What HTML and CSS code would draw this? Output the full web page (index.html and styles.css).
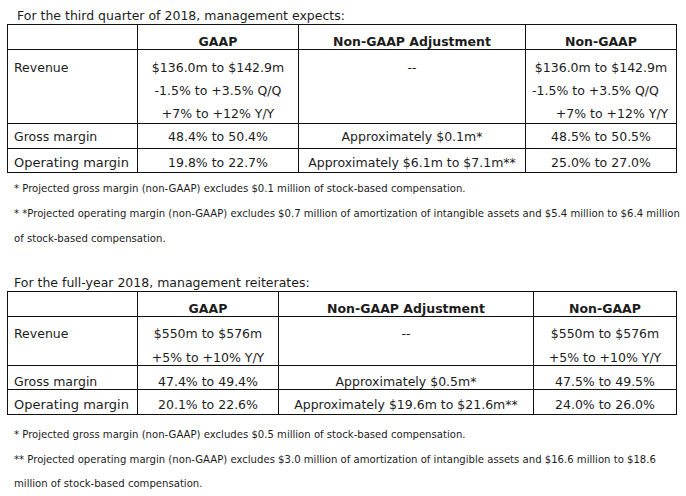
FILE: index.html
```html
<!DOCTYPE html>
<html>
<head>
<meta charset="utf-8">
<link rel="stylesheet" href="styles.css">
</head>
<body>
<div class="page">
  <section class="block block-q3">
    <div class="title title-q3">For the third quarter of 2018, management expects:</div>
    <table class="guide guide-q3">
      <colgroup>
        <col class="c1"><col class="c2"><col class="c3"><col class="c4">
      </colgroup>
      <tr class="head">
        <th></th><th>GAAP</th><th>Non-GAAP Adjustment</th><th>Non-GAAP</th>
      </tr>
      <tr class="rev">
        <td class="label"><div>Revenue</div></td>
        <td class="val">
          <div>$136.0m to $142.9m</div>
          <div>-1.5% to +3.5% Q/Q</div>
          <div class="end">+7% to +12% Y/Y</div>
        </td>
        <td class="val"><div>--</div></td>
        <td class="val ng">
          <div>$136.0m to $142.9m</div>
          <div class="l2">-1.5% to +3.5% Q/Q</div>
          <div class="l3 end">+7% to +12% Y/Y</div>
        </td>
      </tr>
      <tr class="row gross">
        <td class="label">Gross margin</td>
        <td class="val">48.4% to 50.4%</td>
        <td class="val">Approximately $0.1m*</td>
        <td class="val">48.5% to 50.5%</td>
      </tr>
      <tr class="row oper">
        <td class="label big">Operating margin</td>
        <td class="val">19.8% to 22.7%</td>
        <td class="val">Approximately $6.1m to $7.1m**</td>
        <td class="val">25.0% to 27.0%</td>
      </tr>
    </table>
    <div class="notes">
      <p>* Projected gross margin (non-GAAP) excludes $0.1 million of stock-based compensation.</p>
      <p>* *Projected operating margin (non-GAAP) excludes $0.7 million of amortization of intangible assets and $5.4 million to $6.4 million</p>
      <p>of stock-based compensation.</p>
    </div>
  </section>

  <section class="block block-fy">
    <div class="title title-fy">For the full-year 2018, management reiterates:</div>
    <table class="guide guide-fy">
      <colgroup>
        <col class="c1"><col class="c2"><col class="c3"><col class="c4">
      </colgroup>
      <tr class="head">
        <th></th><th>GAAP</th><th>Non-GAAP Adjustment</th><th>Non-GAAP</th>
      </tr>
      <tr class="rev">
        <td class="label"><div>Revenue</div></td>
        <td class="val">
          <div>$550m to $576m</div>
          <div class="end">+5% to +10% Y/Y</div>
        </td>
        <td class="val"><div>--</div></td>
        <td class="val">
          <div>$550m to $576m</div>
          <div class="end">+5% to +10% Y/Y</div>
        </td>
      </tr>
      <tr class="row gross">
        <td class="label">Gross margin</td>
        <td class="val">47.4% to 49.4%</td>
        <td class="val">Approximately $0.5m*</td>
        <td class="val">47.5% to 49.5%</td>
      </tr>
      <tr class="row oper">
        <td class="label big">Operating margin</td>
        <td class="val">20.1% to 22.6%</td>
        <td class="val">Approximately $19.6m to $21.6m**</td>
        <td class="val">24.0% to 26.0%</td>
      </tr>
    </table>
    <div class="notes">
      <p>* Projected gross margin (non-GAAP) excludes $0.5 million of stock-based compensation.</p>
      <p>** Projected operating margin (non-GAAP) excludes $3.0 million of amortization of intangible assets and $16.6 million to $18.6</p>
      <p>million of stock-based compensation.</p>
    </div>
  </section>
</div>
</body>
</html>
```

FILE: styles.css
```css
html, body {
  margin: 0;
  padding: 0;
  background: #ffffff;
}

body {
  font-family: "DejaVu Sans", "Liberation Sans", sans-serif;
  color: #1c1c1c;
  width: 686px;
  height: 496px;
  overflow: hidden;
}

.page {
  padding-left: 7px;
}

.title {
  font-size: 12.5px;
  line-height: 16px;
  height: 16px;
  white-space: nowrap;
}

.title-q3 {
  padding-top: 8px;
  padding-left: 10px;
}

.title-fy {
  padding-top: 0;
  padding-left: 7px;
}

.block-fy {
  margin-top: 24px;
}

.guide {
  border-collapse: collapse;
  table-layout: fixed;
  width: 670px;
  font-size: 12.5px;
}

.guide th,
.guide td {
  border: 1px solid #111;
  padding: 0;
  text-align: center;
  vertical-align: top;
  white-space: nowrap;
}

.guide th {
  font-weight: bold;
  padding-top: 10px;
  line-height: 14px;
}

.guide td.label {
  text-align: left;
  padding-left: 6px;
}

.guide td.label.big {
  font-size: 13px;
}

/* Revenue rows: text sits low in the first line */
.guide-q3 .rev td {
  padding-top: 6px;
  line-height: 23px;
}

.guide-q3 .rev td div {
  height: 23px;
}

.guide-q3 .rev td div.end {
  height: 21px;
}

.guide-fy .rev td {
  padding-top: 5px;
  line-height: 24px;
}

.guide-fy .rev td div {
  height: 24px;
}

.guide-fy .rev td div.end {
  height: 19px;
}

.guide .ng .l2 {
  text-align: left;
  padding-left: 6px;
}

.guide .ng .l3 {
  padding-left: 22px;
}

/* Margin rows */
.guide-q3 .gross td {
  padding-top: 1px;
  line-height: 23px;
}

.guide-q3 .oper td {
  padding-top: 4px;
  line-height: 19px;
}

.guide-fy .gross td {
  padding-top: 8px;
  line-height: 15px;
}

.guide-fy .oper td {
  padding-top: 5px;
  line-height: 19px;
}

.guide-q3 .c1 { width: 130px; }
.guide-q3 .c2 { width: 161px; }
.guide-q3 .c3 { width: 227px; }
.guide-q3 .c4 { width: 151px; }

.guide-fy .c1 { width: 130px; }
.guide-fy .c2 { width: 141px; }
.guide-fy .c3 { width: 255px; }
.guide-fy .c4 { width: 143px; }

.notes {
  padding-left: 7px;
  padding-top: 3px;
  font-size: 10.1px;
}

.block-fy .notes {
  padding-top: 8px;
}

.notes p {
  margin: 0;
  line-height: 25px;
  white-space: nowrap;
}

.block-fy .notes p {
  line-height: 24.5px;
}
```
